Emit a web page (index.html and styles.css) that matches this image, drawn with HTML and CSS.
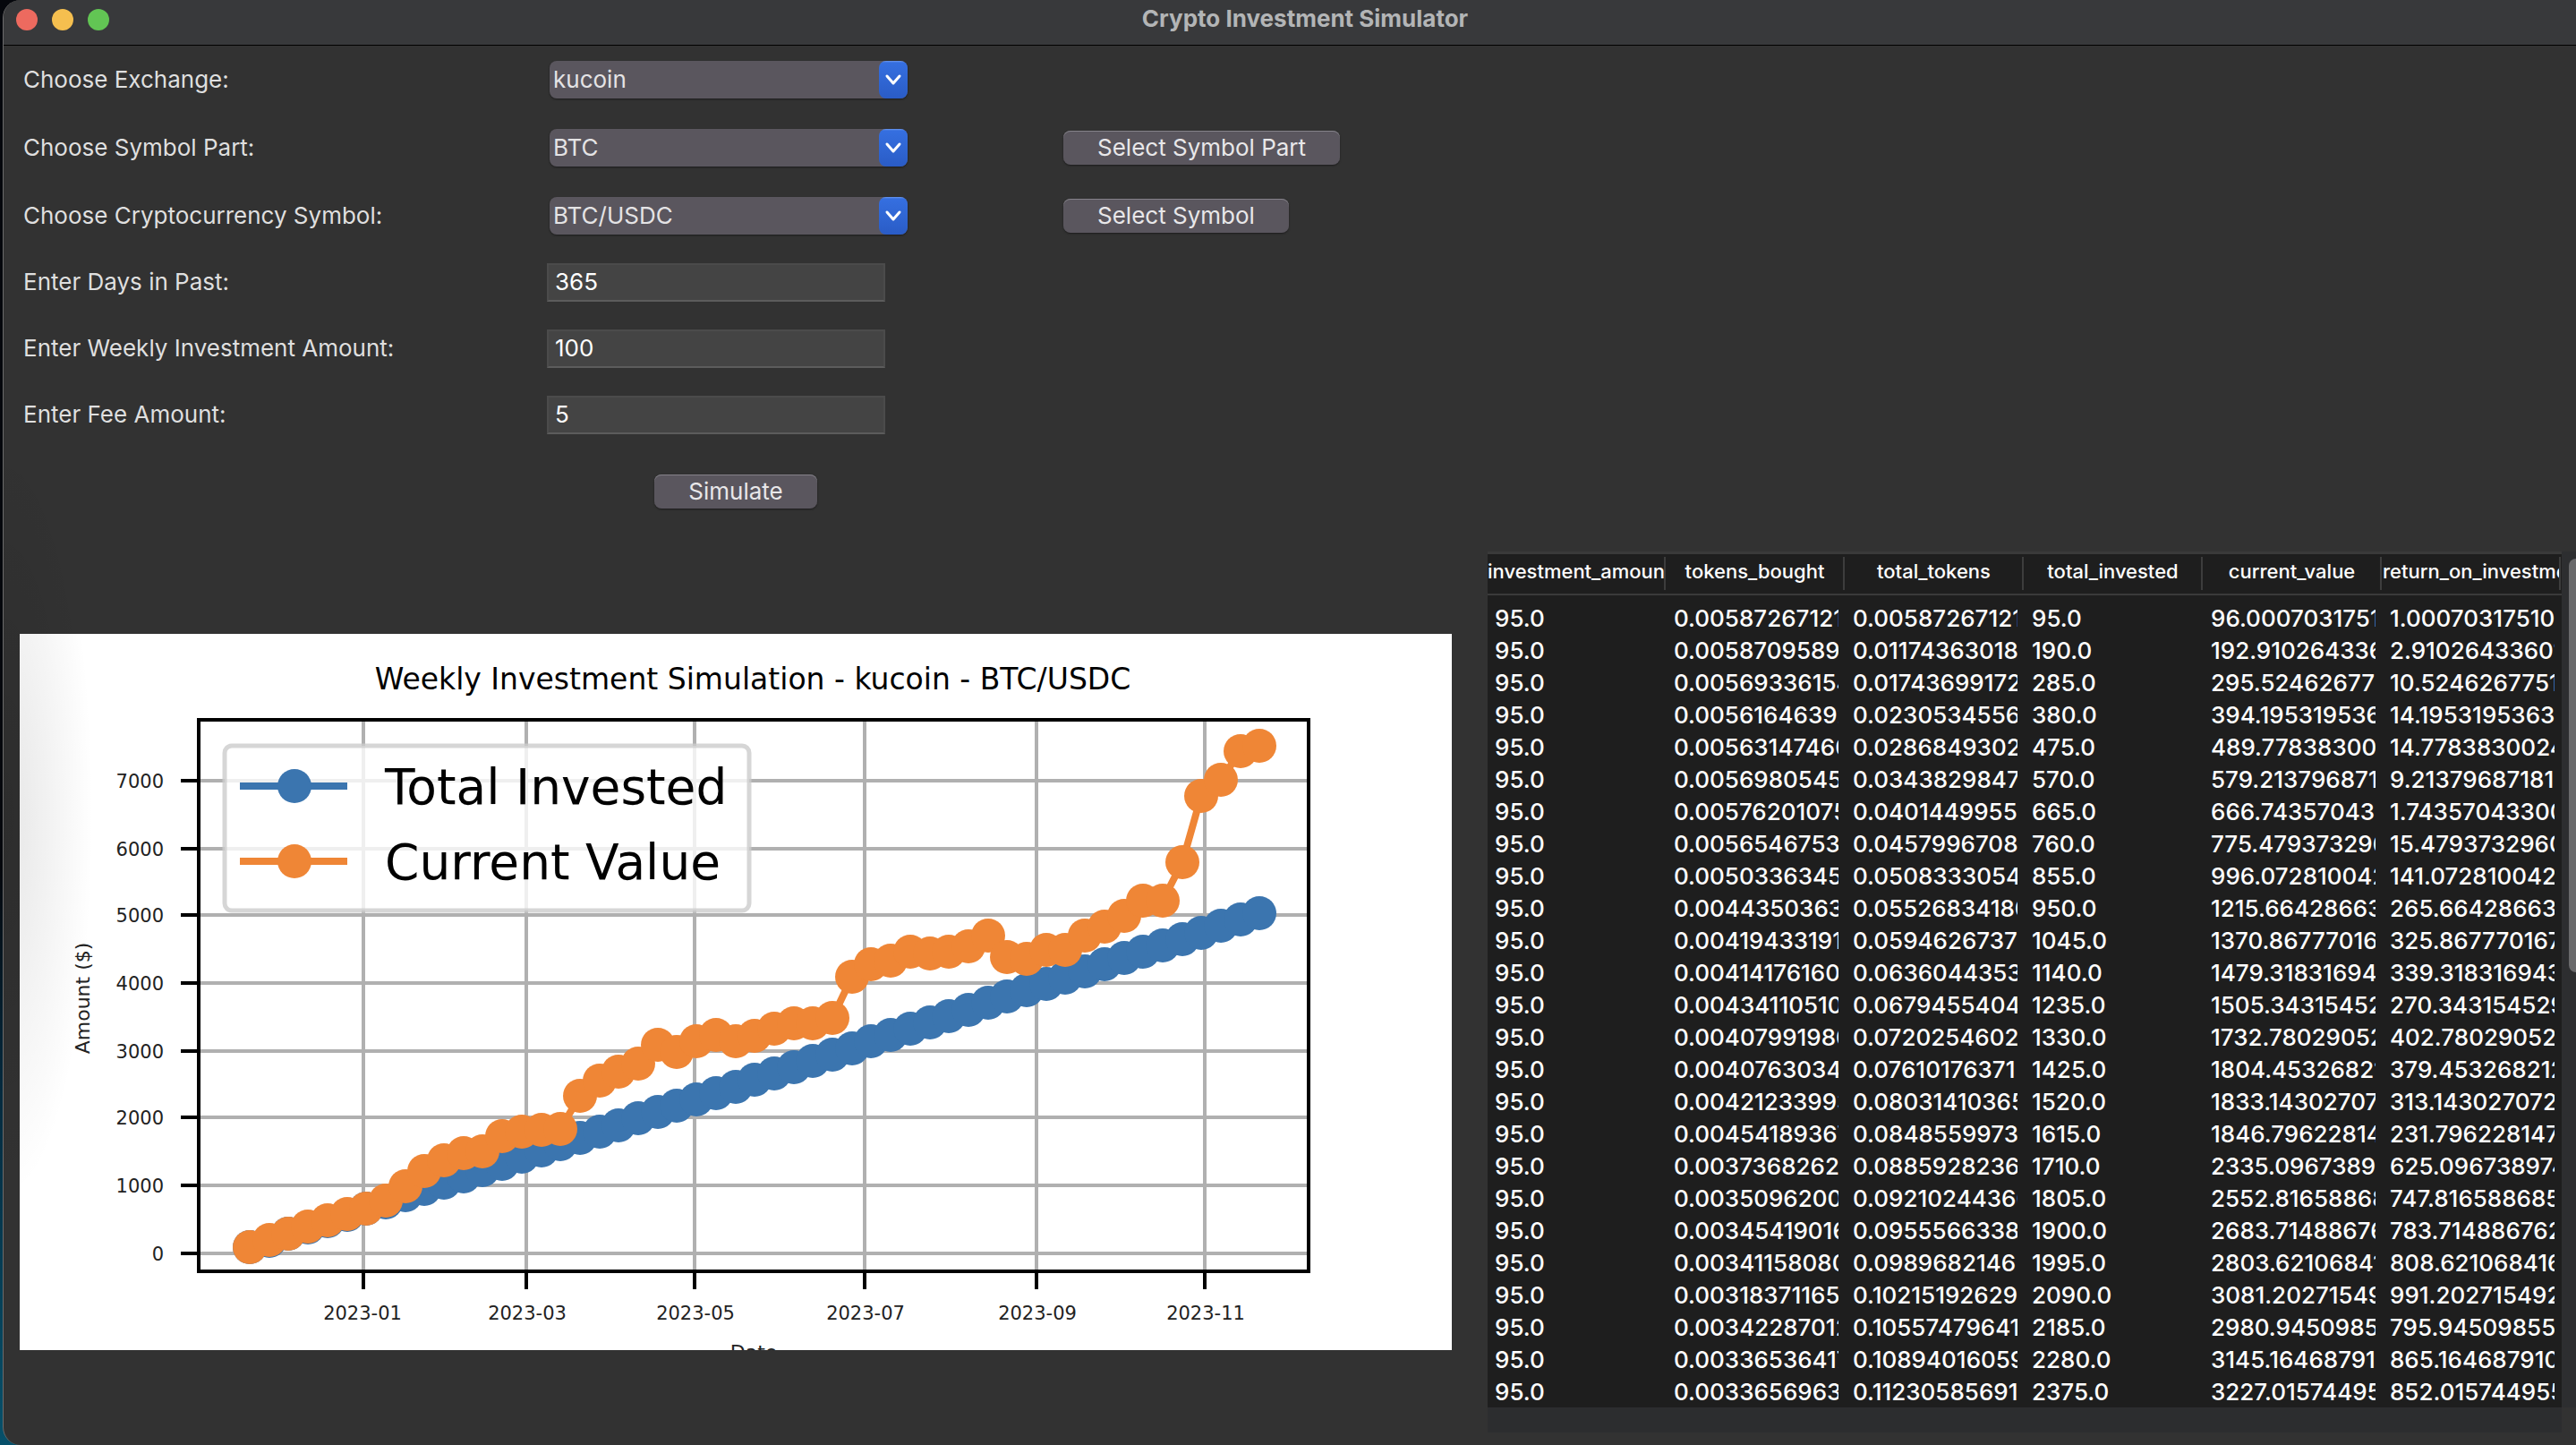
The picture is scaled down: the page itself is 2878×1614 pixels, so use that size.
FILE: index.html
```html
<!DOCTYPE html>
<html lang="en">
<head>
<meta charset="utf-8">
<title>Crypto Investment Simulator</title>
<link rel="stylesheet" href="styles.css">
</head>
<body>
<div class="window">
  <header class="titlebar">
    <div class="lights">
      <button class="light light-close" type="button" aria-label="Close"></button>
      <button class="light light-minimize" type="button" aria-label="Minimize"></button>
      <button class="light light-zoom" type="button" aria-label="Zoom"></button>
    </div>
    <h1 class="title">Crypto Investment Simulator</h1>
  </header>

  <main class="content">
    <form class="form">
      <div class="row row-select">
        <label for="exchange">Choose Exchange:</label>
        <div class="combo">
          <select id="exchange"><option>kucoin</option></select>
          <span class="combo-arrow"><svg viewBox="0 0 32 42"><path d="M9 17l7 8 7-8"/></svg></span>
        </div>
      </div>
      <div class="row row-select">
        <label for="part">Choose Symbol Part:</label>
        <div class="combo">
          <select id="part"><option>BTC</option></select>
          <span class="combo-arrow"><svg viewBox="0 0 32 42"><path d="M9 17l7 8 7-8"/></svg></span>
        </div>
        <button class="push" type="button">Select Symbol Part</button>
      </div>
      <div class="row row-select">
        <label for="symbol">Choose Cryptocurrency Symbol:</label>
        <div class="combo">
          <select id="symbol"><option>BTC/USDC</option></select>
          <span class="combo-arrow"><svg viewBox="0 0 32 42"><path d="M9 17l7 8 7-8"/></svg></span>
        </div>
        <button class="push" type="button">Select Symbol</button>
      </div>
      <div class="row row-entry">
        <label for="days">Enter Days in Past:</label>
        <input class="entry" id="days" type="text" value="365">
      </div>
      <div class="row row-entry">
        <label for="amount">Enter Weekly Investment Amount:</label>
        <input class="entry" id="amount" type="text" value="100">
      </div>
      <div class="row row-entry">
        <label for="fee">Enter Fee Amount:</label>
        <input class="entry" id="fee" type="text" value="5">
      </div>
      <div class="row row-action">
        <button class="push push-simulate" type="button">Simulate</button>
      </div>
    </form>

    <figure class="chart">
      <svg viewBox="0 0 1600 800" role="img" aria-label="Weekly investment simulation chart">
        <defs>
          <marker id="dot-blue" viewBox="0 0 40 40" refX="20" refY="20" markerWidth="40" markerHeight="40" markerUnits="userSpaceOnUse"><circle class="dot-blue" cx="20" cy="20" r="19"/></marker>
          <marker id="dot-orange" viewBox="0 0 40 40" refX="20" refY="20" markerWidth="40" markerHeight="40" markerUnits="userSpaceOnUse"><circle class="dot-orange" cx="20" cy="20" r="19"/></marker>
        </defs>
        <text class="chart-title" x="819" y="62">Weekly Investment Simulation - kucoin - BTC/USDC</text>
        <path class="grid" d="M200 164H1440M200 240H1440M200 314H1440M200 390H1440M200 466H1440M200 540H1440M200 616H1440M200 692H1440M384 96V712M566 96V712M754 96V712M944 96V712M1136 96V712M1324 96V712"/>
        <path class="axis" d="M180 164H200M180 240H200M180 314H200M180 390H200M180 466H200M180 540H200M180 616H200M180 692H200M384 712V732M566 712V732M754 712V732M944 712V732M1136 712V732M1324 712V732"/>
        <polyline class="line line-blue" points="257,685 279,678 300,670 322,663 344,656 366,649 387,642 409,635 431,627 452,620 474,613 496,606 517,599 539,592 561,584 583,577 604,570 626,563 648,556 669,549 691,541 713,534 734,527 756,520 778,513 800,506 821,498 843,491 865,484 886,477 908,470 930,463 951,455 973,448 995,441 1017,434 1038,427 1060,420 1082,412 1103,405 1125,398 1147,391 1168,384 1190,377 1212,369 1234,362 1255,355 1277,348 1299,341 1320,334 1342,326 1364,319 1385,312"/>
        <polyline class="line line-orange" points="257,685 279,677 300,670 322,662 344,655 366,648 387,642 409,633 431,617 452,600 474,588 496,580 517,578 539,561 561,556 583,554 604,553 626,516 648,499 669,489 691,480 713,459 734,467 756,455 778,448 800,455 821,449 843,441 865,435 886,435 908,429 930,383 951,369 973,365 995,355 1017,357 1038,355 1060,349 1082,337 1103,361 1125,363 1147,353 1168,353 1190,337 1212,327 1234,315 1255,298 1277,298 1299,255 1320,181 1342,163 1364,131 1385,125"/>
        <rect class="axis" x="200" y="96" width="1240" height="616"/>
        <rect class="legend" x="229" y="125" width="586" height="184" rx="8"/>
        <path class="line legend-line-blue" d="M246 170H366"/><circle class="dot-blue" cx="307" cy="170" r="19"/>
        <path class="line legend-line-orange" d="M246 254H366"/><circle class="dot-orange" cx="307" cy="254" r="19"/>
        <g class="legend-text"><text x="408" y="190">Total Invested</text><text x="408" y="274">Current Value</text></g>
        <g class="tick tick-y">
          <text x="161" y="172">7000</text><text x="161" y="248">6000</text><text x="161" y="322">5000</text><text x="161" y="398">4000</text><text x="161" y="474">3000</text><text x="161" y="548">2000</text><text x="161" y="624">1000</text><text x="161" y="700">0</text>
        </g>
        <g class="tick tick-x">
          <text x="383" y="766">2023-01</text><text x="567" y="766">2023-03</text><text x="755" y="766">2023-05</text><text x="945" y="766">2023-07</text><text x="1137" y="766">2023-09</text><text x="1325" y="766">2023-11</text>
        </g>
        <text class="axis-label" x="820" y="810">Date</text>
        <text class="axis-label" transform="translate(78 407) rotate(-90)">Amount ($)</text>
      </svg>
    </figure>

    <section class="results">
      <div class="table-wrap">
        <table>
          <thead>
            <tr><th><div>investment_amount</div></th><th><div>tokens_bought</div></th><th><div>total_tokens</div></th><th><div>total_invested</div></th><th><div>current_value</div></th><th><div>return_on_investment</div></th></tr>
          </thead>
          <tbody>
            <tr><td><div>95.0</div></td><td><div>0.00587267121</div></td><td><div>0.00587267121</div></td><td><div>95.0</div></td><td><div>96.0007031751</div></td><td><div>1.00070317510</div></td></tr>
            <tr><td><div>95.0</div></td><td><div>0.0058709589</div></td><td><div>0.01174363018</div></td><td><div>190.0</div></td><td><div>192.910264336</div></td><td><div>2.91026433601</div></td></tr>
            <tr><td><div>95.0</div></td><td><div>0.00569336154</div></td><td><div>0.01743699172</div></td><td><div>285.0</div></td><td><div>295.524626775</div></td><td><div>10.5246267751</div></td></tr>
            <tr><td><div>95.0</div></td><td><div>0.00561646392</div></td><td><div>0.0230534556</div></td><td><div>380.0</div></td><td><div>394.195319536</div></td><td><div>14.1953195363</div></td></tr>
            <tr><td><div>95.0</div></td><td><div>0.00563147460</div></td><td><div>0.0286849302</div></td><td><div>475.0</div></td><td><div>489.77838300</div></td><td><div>14.7783830024</div></td></tr>
            <tr><td><div>95.0</div></td><td><div>0.0056980545</div></td><td><div>0.0343829847</div></td><td><div>570.0</div></td><td><div>579.213796871</div></td><td><div>9.21379687181</div></td></tr>
            <tr><td><div>95.0</div></td><td><div>0.00576201075</div></td><td><div>0.04014499554</div></td><td><div>665.0</div></td><td><div>666.74357043</div></td><td><div>1.74357043300</div></td></tr>
            <tr><td><div>95.0</div></td><td><div>0.0056546753</div></td><td><div>0.0457996708</div></td><td><div>760.0</div></td><td><div>775.479373296</div></td><td><div>15.4793732960</div></td></tr>
            <tr><td><div>95.0</div></td><td><div>0.0050336345</div></td><td><div>0.0508333054</div></td><td><div>855.0</div></td><td><div>996.072810042</div></td><td><div>141.072810042</div></td></tr>
            <tr><td><div>95.0</div></td><td><div>0.0044350363</div></td><td><div>0.05526834180</div></td><td><div>950.0</div></td><td><div>1215.66428663</div></td><td><div>265.66428663</div></td></tr>
            <tr><td><div>95.0</div></td><td><div>0.00419433191</div></td><td><div>0.05946267371</div></td><td><div>1045.0</div></td><td><div>1370.86777016</div></td><td><div>325.867770167</div></td></tr>
            <tr><td><div>95.0</div></td><td><div>0.00414176160</div></td><td><div>0.0636044353</div></td><td><div>1140.0</div></td><td><div>1479.31831694</div></td><td><div>339.318316943</div></td></tr>
            <tr><td><div>95.0</div></td><td><div>0.00434110510</div></td><td><div>0.0679455404</div></td><td><div>1235.0</div></td><td><div>1505.34315452</div></td><td><div>270.343154529</div></td></tr>
            <tr><td><div>95.0</div></td><td><div>0.00407991980</div></td><td><div>0.0720254602</div></td><td><div>1330.0</div></td><td><div>1732.78029052</div></td><td><div>402.78029052</div></td></tr>
            <tr><td><div>95.0</div></td><td><div>0.0040763034</div></td><td><div>0.07610176371</div></td><td><div>1425.0</div></td><td><div>1804.45326821</div></td><td><div>379.453268212</div></td></tr>
            <tr><td><div>95.0</div></td><td><div>0.00421233993</div></td><td><div>0.08031410365</div></td><td><div>1520.0</div></td><td><div>1833.14302707</div></td><td><div>313.143027072</div></td></tr>
            <tr><td><div>95.0</div></td><td><div>0.00454189367</div></td><td><div>0.0848559973</div></td><td><div>1615.0</div></td><td><div>1846.79622814</div></td><td><div>231.796228147</div></td></tr>
            <tr><td><div>95.0</div></td><td><div>0.0037368262</div></td><td><div>0.0885928236</div></td><td><div>1710.0</div></td><td><div>2335.0967389</div></td><td><div>625.096738974</div></td></tr>
            <tr><td><div>95.0</div></td><td><div>0.0035096200</div></td><td><div>0.09210244360</div></td><td><div>1805.0</div></td><td><div>2552.81658868</div></td><td><div>747.816588685</div></td></tr>
            <tr><td><div>95.0</div></td><td><div>0.00345419016</div></td><td><div>0.0955566338</div></td><td><div>1900.0</div></td><td><div>2683.71488676</div></td><td><div>783.714886762</div></td></tr>
            <tr><td><div>95.0</div></td><td><div>0.00341158080</div></td><td><div>0.0989682146</div></td><td><div>1995.0</div></td><td><div>2803.62106841</div></td><td><div>808.621068416</div></td></tr>
            <tr><td><div>95.0</div></td><td><div>0.00318371165</div></td><td><div>0.10215192629</div></td><td><div>2090.0</div></td><td><div>3081.20271549</div></td><td><div>991.202715492</div></td></tr>
            <tr><td><div>95.0</div></td><td><div>0.00342287012</div></td><td><div>0.10557479641</div></td><td><div>2185.0</div></td><td><div>2980.9450985</div></td><td><div>795.94509855</div></td></tr>
            <tr><td><div>95.0</div></td><td><div>0.00336536417</div></td><td><div>0.10894016059</div></td><td><div>2280.0</div></td><td><div>3145.16468791</div></td><td><div>865.164687910</div></td></tr>
            <tr><td><div>95.0</div></td><td><div>0.0033656963</div></td><td><div>0.11230585691</div></td><td><div>2375.0</div></td><td><div>3227.01574495</div></td><td><div>852.015744955</div></td></tr>
          </tbody>
        </table>
      </div>
      <div class="track-v"><div class="thumb"></div></div>
      <div class="track-h"></div>
    </section>
  </main>
</div>
</body>
</html>
```
FILE: styles.css
```css
* {
  box-sizing: border-box;
}

body {
  margin: 0;
  padding-left: 3px;
  min-height: 100vh;
  display: flex;
  overflow: hidden;
  background: linear-gradient(#05070c 0, #05070c 60%, #05293d 75%, #07506a 100%);
  font-family: Inter, "Liberation Sans", sans-serif;
  font-size: 26px;
  line-height: 32px;
  color: #dfdfdf;
}

/* Window frame */
.window {
  position: relative;
  flex: 1;
  min-width: 0;
  display: flex;
  flex-direction: column;
  background: #323232;
  border-left: 1px solid #6b6b6b;
  border-radius: 20px 0 0 20px;
  overflow: hidden;
}

/* Soft shade along the left edge */
.window::after {
  content: "";
  position: absolute;
  left: 0;
  top: 480px;
  width: 100px;
  height: 860px;
  background: radial-gradient(ellipse 100px 430px at 0 50%, rgba(0, 0, 0, 0.1), transparent);
  pointer-events: none;
}

.titlebar {
  display: grid;
  grid-template-columns: 1fr auto 1fr;
  align-items: center;
  height: 51px;
  padding: 0 14px 6px;
  background: #38393b;
  border-bottom: 1px solid #000;
}

.lights {
  display: flex;
  gap: 16px;
}

.light {
  width: 24px;
  height: 24px;
  padding: 0;
  border: 0;
  border-radius: 50%;
}

.light-close { background: #ed6a5f; }
.light-minimize { background: #f5bf4f; }
.light-zoom { background: #62c554; }

.title {
  margin: 0;
  padding: 0 0 2px 34px;
  font-size: 26px;
  font-weight: 700;
  line-height: 32px;
  color: #b3b5b6;
}

/* Main grid */
.content {
  flex: 1;
  display: grid;
  grid-template-columns: 1600fr 1216fr;
  grid-template-rows: auto auto;
  align-content: start;
  column-gap: 40px;
  padding: 0 0 14px 18px;
}

.form {
  grid-column: 1 / -1;
  padding: 0 0 19px 4px;
}

.row {
  display: grid;
  grid-template-columns: 584px 424px auto;
  column-gap: 0;
  align-items: center;
  justify-content: start;
}

.row-select {
  height: 76px;
}

.row-entry {
  height: 74px;
  padding-bottom: 2px;
}

.row-action {
  height: 96px;
}

.combo {
  position: relative;
  width: 400px;
  height: 42px;
  margin-left: 4px;
}

.combo select {
  appearance: none;
  width: 100%;
  height: 100%;
  padding: 0 40px 0 4px;
  border: 0;
  border-radius: 8px;
  background: #5a565e;
  box-shadow: 0 1px 2px #1c1c1c;
  font: inherit;
  color: #e4e3e5;
}

.combo-arrow {
  position: absolute;
  top: 0;
  right: 0;
  width: 32px;
  height: 42px;
  border-radius: 8px;
  background: linear-gradient(#6b97ee 0, #356fe0 2px, #2a5cc6 100%);
  pointer-events: none;
}

.combo-arrow svg {
  display: block;
  fill: none;
  stroke: #fff;
  stroke-width: 3;
  stroke-linecap: round;
  stroke-linejoin: round;
}

.entry {
  width: 378px;
  height: 43px;
  margin-left: 1px;
  padding: 0 7px 1px;
  border: 2px solid #4b4b4b;
  border-bottom-color: #5c5c5c;
  background: #444;
  font: inherit;
  color: #fff;
}

.push {
  height: 38px;
  margin-left: 154px;
  padding: 0 38px;
  border: 0;
  border-radius: 8px;
  background: #5a565e;
  box-shadow: inset 0 1px 0 #85828a, 0 1px 2px #1c1c1c;
  font: inherit;
  color: #e8e7e9;
}

.push-simulate {
  grid-column: 2;
  justify-self: center;
  margin-left: 0;
}

/* Chart */
.chart {
  align-self: center;
  margin: 0;
  background: #fff;
}

.chart svg {
  display: block;
  width: 100%;
  font-family: "DejaVu Sans", sans-serif;
}

.grid {
  fill: none;
  stroke: #b0b0b0;
  stroke-width: 4;
}

.axis {
  fill: none;
  stroke: #000;
  stroke-width: 4;
}

.line {
  fill: none;
  stroke-width: 8;
}

.line-blue {
  stroke: #3b75af;
  marker: url(#dot-blue);
}

.line-orange {
  stroke: #ef8636;
  marker: url(#dot-orange);
}

.legend-line-blue { stroke: #3b75af; }
.legend-line-orange { stroke: #ef8636; }
.dot-blue { fill: #3b75af; }
.dot-orange { fill: #ef8636; }

.legend {
  fill: #fff;
  fill-opacity: 0.8;
  stroke: #ccc;
  stroke-opacity: 0.8;
  stroke-width: 5;
}

.legend-text { font-size: 55px; }

.chart-title {
  font-size: 33px;
  text-anchor: middle;
}

.tick {
  font-size: 21px;
  fill: #222;
}

.tick-y { text-anchor: end; }
.tick-x { text-anchor: middle; }

.axis-label {
  font-size: 22px;
  fill: #222;
  text-anchor: middle;
}

/* Results table */
.results {
  display: grid;
  grid-template-columns: 1fr 16px;
  min-width: 0;
}

.table-wrap {
  overflow: hidden;
  background: #1e1e1e;
}

table {
  width: 100%;
  table-layout: fixed;
  border-collapse: separate;
  border-spacing: 0;
  color: #fff;
}

th {
  height: 49px;
  padding: 2px 1px 3px 0;
  border-top: 3px solid #3a3a3a;
  border-bottom: 2px solid #3a3a3a;
  font-size: 22px;
  font-weight: 500;
  line-height: 32px;
}

th div {
  height: 37px;
  border-right: 2px solid #3d3d3d;
  overflow: hidden;
  white-space: nowrap;
  text-align: center;
}

td {
  height: 36px;
  padding: 3px 8px 1px;
  font-weight: 500;
  line-height: 32px;
}

td div {
  overflow: hidden;
  white-space: nowrap;
}

tbody tr:first-child td {
  height: 43px;
  padding-top: 10px;
}

.track-v {
  padding-top: 8px;
  padding-left: 8px;
  background: #2d2e30;
}

.thumb {
  height: 462px;
  border-radius: 8px 0 0 8px;
  background: #69696b;
}

.track-h {
  height: 28px;
  background: #2c2d2f;
}
```
